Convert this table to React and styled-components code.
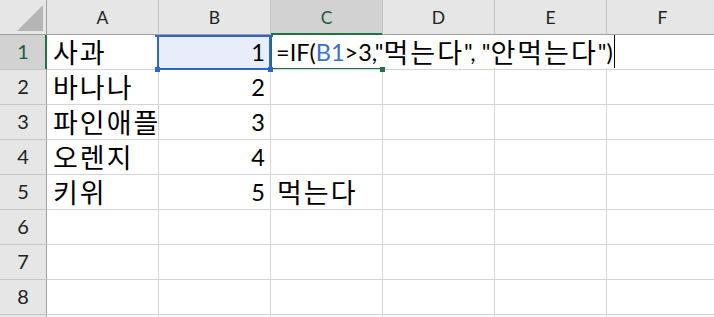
import React from 'react';
import styled, { createGlobalStyle, css } from 'styled-components';

const Global = createGlobalStyle`
  html, body { margin: 0; padding: 0; background: #fff; overflow: hidden; }
  #root { width: 714px; height: 317px; overflow: hidden; }
`;

const GREEN = '#217346';
const BLUE = '#2f64c8';
const HEAD_LINE = '#a0a0a0';
const HEAD_SEP = '#c6c6c6';
const GRID = '#d4d4d4';
const LATIN = `Lato, "Liberation Sans", "Noto Sans CJK KR", sans-serif`;

const Sheet = styled.div`
  display: grid;
  grid-template-columns: 47px repeat(6, 112px);
  grid-template-rows: repeat(10, 35px);
  width: max-content;
`;

const Corner = styled.div`
  position: relative;
  z-index: 3;
  box-sizing: border-box;
  display: flex;
  justify-content: flex-end;
  align-items: flex-end;
  padding: 0 3px 3px 0;
  background: #e6e6e6;
  border-right: 1px solid ${HEAD_LINE};
  border-bottom: 1px solid ${HEAD_LINE};
`;

const headText = css`
  font-family: ${LATIN};
  color: #222;
  box-sizing: border-box;
  display: flex;
  justify-content: center;
  align-items: flex-end;
  position: relative;
  z-index: 3;
  background: #e6e6e6;
`;

const ColHead = styled.div`
  ${headText};
  font-size: 17.5px;
  padding-bottom: 6px;
  border-right: 1px solid ${HEAD_SEP};
  border-bottom: 1px solid ${HEAD_LINE};
  ${(p) =>
    p.$selected &&
    css`
      background: #d2d2d2;
      color: #1d5e39;
      border-bottom-color: ${GREEN};
      box-shadow: inset 0 -1px 0 ${GREEN};
    `}
`;

const RowHead = styled.div`
  ${headText};
  font-size: 20px;
  padding-bottom: 6px;
  border-right: 1px solid ${HEAD_LINE};
  border-bottom: 1px solid ${HEAD_SEP};
  ${(p) =>
    p.$selected &&
    css`
      background: #d2d2d2;
      color: #1d5e39;
      border-right-color: ${GREEN};
      box-shadow: inset -1px 0 0 ${GREEN};
    `}
`;

const Cell = styled.div`
  position: relative;
  box-sizing: border-box;
  display: flex;
  align-items: center;
  justify-content: ${(p) => (p.$num ? 'flex-end' : 'flex-start')};
  padding: 0 5px 0 6px;
  font-family: ${LATIN};
  font-size: 23.5px;
  line-height: 30px;
  color: #000;
  white-space: nowrap;
  background: ${(p) => (p.$tint ? '#e7eef9' : '#fff')};
  border-right: 1px solid ${GRID};
  border-bottom: 1px solid ${GRID};
  ${(p) => p.$active && css`z-index: 2;`}
`;

const Ko = styled.span`
  font-family: "Noto Sans CJK KR", sans-serif;
  font-size: 27px;
  line-height: 30px;
  letter-spacing: 2px;
`;

const RefText = styled.span`
  color: #3a6fd2;
`;

/* blue frame of the cell a formula points at */
const RefFrame = styled.div`
  position: absolute;
  inset: 0 -1px -1px -2px;
  border: 2px solid ${BLUE};
  pointer-events: none;
  z-index: 4;
`;

const cornerPos = {
  tl: css`left: -4px; top: 0; height: 2px;`,
  tr: css`right: -3px; top: 0; height: 2px;`,
  bl: css`left: -4px; bottom: -3px;`,
  br: css`right: -3px; bottom: -3px;`,
};

const Handle = styled.div`
  position: absolute;
  width: 5px;
  height: 5px;
  background: ${(p) => p.$color};
  z-index: 5;
  ${(p) => cornerPos[p.$corner]};
`;

/* green frame of the cell being edited */
const ActiveFrame = styled.div`
  position: absolute;
  inset: -2px -1px 0 -1px;
  border-left: 2px solid ${GREEN};
  border-top: 2px solid ${GREEN};
  border-bottom: 2px solid ${GREEN};
  pointer-events: none;
`;

const Editor = styled.div`
  position: absolute;
  left: 1px;
  top: 0;
  height: 33px;
  display: flex;
  align-items: center;
  padding-left: 4px;
  background: #fff;
  white-space: nowrap;
  z-index: 3;
`;

const Caret = styled.span`
  display: inline-block;
  width: 1px;
  height: 33px;
  margin-left: 1px;
  background: #000;
`;

const fruits = ['사과', '바나나', '파인애플', '오렌지', '키위'];
const cols = ['A', 'B', 'C', 'D', 'E', 'F'];
const rows = [1, 2, 3, 4, 5, 6, 7, 8, 9];

function renderCell(r, c) {
  const key = `${c}${r}`;
  if (c === 'A' && r <= 5) {
    return (
      <Cell key={key}>
        <Ko>{fruits[r - 1]}</Ko>
      </Cell>
    );
  }
  if (c === 'B' && r <= 5) {
    return (
      <Cell key={key} $num $tint={r === 1}>
        {r}
        {r === 1 && (
          <>
            <RefFrame />
            <Handle $color={BLUE} $corner="tl" />
            <Handle $color={BLUE} $corner="tr" />
            <Handle $color={BLUE} $corner="bl" />
            <Handle $color={BLUE} $corner="br" />
          </>
        )}
      </Cell>
    );
  }
  if (c === 'C' && r === 1) {
    return (
      <Cell key={key} $active>
        <ActiveFrame />
        <Handle $color={GREEN} $corner="br" />
        <Editor>
          =IF(<RefText>B1</RefText>&gt;3,"<Ko>먹는다</Ko>", "<Ko>안먹는다</Ko>")
          <Caret />
        </Editor>
      </Cell>
    );
  }
  if (c === 'C' && r === 5) {
    return (
      <Cell key={key}>
        <Ko>먹는다</Ko>
      </Cell>
    );
  }
  return <Cell key={key} />;
}

export default function App() {
  return (
    <>
      <Global />
      <Sheet>
        <Corner>
          <svg width="26" height="26" viewBox="0 0 26 26">
            <polygon points="26,0 26,26 0,26" fill="#b5b5b5" />
          </svg>
        </Corner>
        {cols.map((c) => (
          <ColHead key={c} $selected={c === 'C'}>
            {c}
          </ColHead>
        ))}
        {rows.map((r) => (
          <React.Fragment key={r}>
            <RowHead $selected={r === 1}>{r < 9 ? r : ''}</RowHead>
            {cols.map((c) => renderCell(r, c))}
          </React.Fragment>
        ))}
      </Sheet>
    </>
  );
}
